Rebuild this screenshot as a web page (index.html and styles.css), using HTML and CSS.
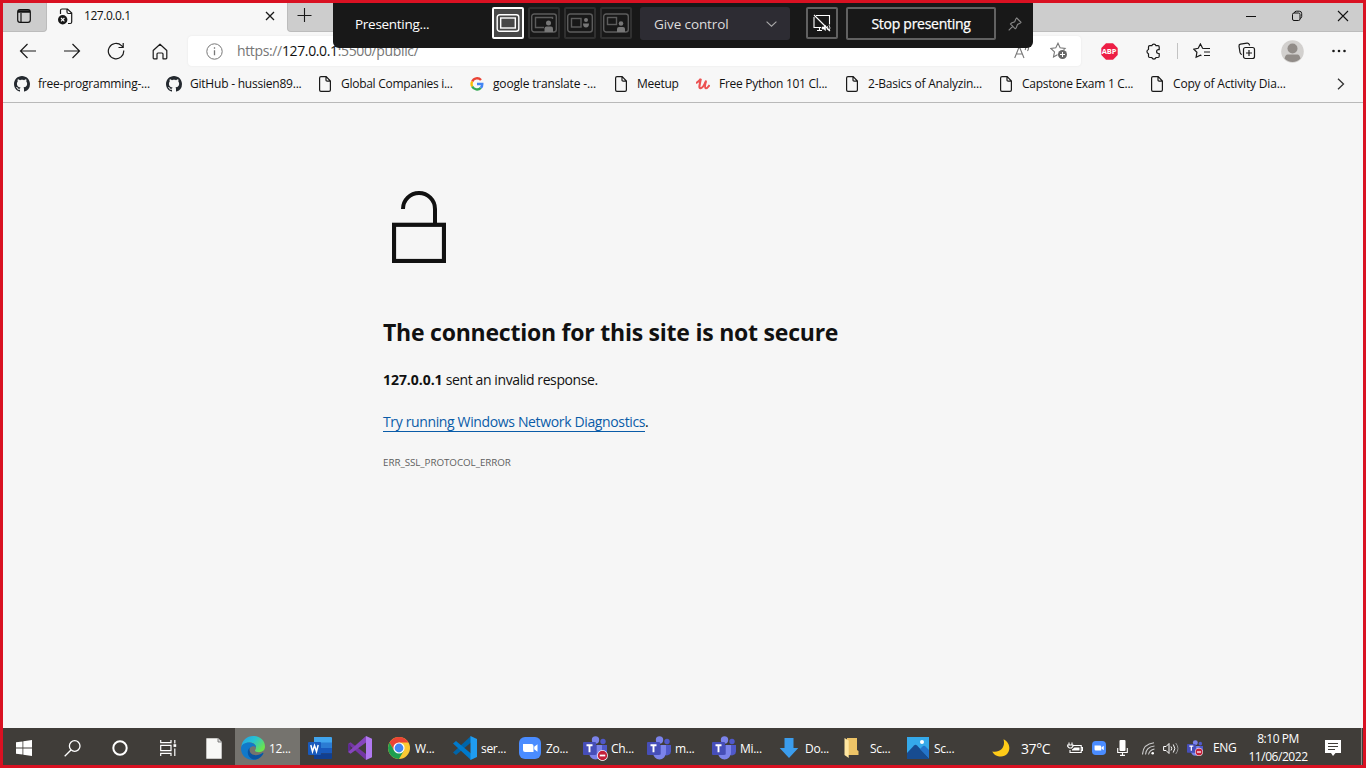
FILE: index.html
```html
<!DOCTYPE html>
<html lang="en">
<head>
<meta charset="utf-8">
<title>127.0.0.1</title>
<link rel="stylesheet" href="styles.css">
</head>
<body>
<svg class="defs" width="0" height="0">
  <symbol id="doc" viewBox="0 0 12 16"><path d="M2 .6h5.200L11.400 5v9q0 1.400-1.400 1.400H2Q.6 15.400.6 14V2Q.6.6 2 .6ZM7 .8V4q0 1.200 1.200 1.200h3" fill="none" stroke="#1a1a1a" stroke-width="1.200"/></symbol>
  <symbol id="github" viewBox="0 0 16 16"><path fill="#24292f" d="M8 0C3.580 0 0 3.580 0 8c0 3.540 2.290 6.530 5.470 7.590.4.070.55-.17.55-.38 0-.19-.01-.82-.01-1.490-2.010.37-2.530-.49-2.690-.94-.09-.23-.48-.94-.82-1.130-.28-.15-.68-.52-.01-.53.63-.01 1.080.58 1.230.82.72 1.210 1.870.87 2.330.66.070-.52.28-.87.51-1.070-1.780-.2-3.640-.89-3.640-3.950 0-.87.31-1.590.82-2.150-.08-.2-.36-1.020.08-2.120 0 0 .67-.21 2.200.82.64-.18 1.320-.27 2-.27s1.360.09 2 .27c1.530-1.040 2.200-.82 2.200-.82.44 1.100.16 1.920.08 2.120.51.56.82 1.270.82 2.150 0 3.070-1.870 3.750-3.650 3.950.29.25.54.73.54 1.480 0 1.070-.01 1.930-.01 2.200 0 .21.15.46.55.38A8 8 0 0 0 16 8c0-4.420-3.580-8-8-8Z"/></symbol>
  <symbol id="teams" viewBox="0 0 24 24"><circle cx="20" cy="5.500" r="2.700" fill="#5059c9"/><path d="M16 9h8v6.500a4 4 0 0 1-7 2.500Z" fill="#5059c9"/><circle cx="12.500" cy="4" r="3.700" fill="#7b83eb"/><path d="M6 9h13v8a6.500 6.500 0 0 1-13 0Z" fill="#7b83eb"/><path d="M7 9h7v9.500H6Z" fill="#565dc4"/><rect y="6" width="13" height="13" rx="1" fill="#464eb8"/><path d="M3.500 9.300h6M6.500 9.300v7" stroke="#fff" stroke-width="1.900"/></symbol>
  <symbol id="zoom" viewBox="0 0 22 22"><rect width="22" height="22" rx="6" fill="#4a8cff"/><path d="M4 7h8.500q2 0 2 2v6H6q-2 0-2-2ZM15.200 9.700 18.500 7.300v7.400l-3.300-2.400Z" fill="#fff"/></symbol>
  <symbol id="badge" viewBox="0 0 10 10"><circle cx="5" cy="5" r="4.900" fill="#fff"/><circle cx="5" cy="5" r="4.300" fill="#c4203a"/><path d="M2.500 5h5" stroke="#fff" stroke-width="1.600"/></symbol>
</svg>

<div class="screen">
  <header class="tabstrip">
    <div class="tab-menu"><svg width="14" height="14" viewBox="0 0 14 14" fill="none" stroke="#111" stroke-width="1.200"><rect x=".7" y=".7" width="12.600" height="12.600" rx="2.300"/><path d="M1 2.500h12" stroke-width="2.500"/><path d="M4 4v9"/></svg></div>
    <div class="tab">
      <svg width="15" height="17" viewBox="0 0 15 17"><path d="M2.500 6V2.500Q2.500 1 4 1h5.500L13.700 5v9q0 1.500-1.500 1.500H10M9 1v3q0 1.500 1.500 1.500h3" fill="none" stroke="#1a1a1a" stroke-width="1.200"/><circle cx="4.700" cy="11.700" r="4.700" fill="#171717"/><path d="m3 10 3.400 3.400m0-3.400L3 13.400" stroke="#fff" stroke-width="1.100"/></svg>
      <span class="tab-title">127.0.0.1</span>
      <svg class="tab-close" width="10" height="10" viewBox="0 0 10 10"><path d="m1 1 8 8m0-8L1 9" stroke="#1a1a1a" stroke-width="1.300"/></svg>
    </div>
    <div class="tab-new"><svg width="16" height="16" viewBox="0 0 16 16"><path d="M7.500 1v14M.5 8.500h14" stroke="#1a1a1a" stroke-width="1.100"/></svg></div>
    <div class="window-buttons">
      <svg width="12" height="12" viewBox="0 0 12 12"><path d="M1 6.500h10" stroke="#111"/></svg>
      <svg width="12" height="12" viewBox="0 0 12 12" fill="none" stroke="#111"><rect x="1.500" y="3" width="7.500" height="7.500" rx="1.500"/><path d="M3.500 3q0-1.800 1.800-1.800h3q2.400 0 2.400 2.400v3q0 1.500-1.700 1.900"/></svg>
      <svg width="12" height="12" viewBox="0 0 12 12"><path d="m1 1 10 10m0-10L1 11" stroke="#111" stroke-width="1.100"/></svg>
    </div>
  </header>

  <nav class="toolbar">
    <span class="nav-btn"><svg width="18" height="16" viewBox="0 0 18 16" fill="none" stroke="#1a1a1a" stroke-width="1.200"><path d="M8.500 1 1.500 8l7 7M1.500 8H17"/></svg></span>
    <span class="nav-btn"><svg width="18" height="16" viewBox="0 0 18 16" fill="none" stroke="#1a1a1a" stroke-width="1.200"><path d="m9.500 1 7 7-7 7M16.500 8H1"/></svg></span>
    <span class="nav-btn"><svg width="18" height="18" viewBox="0 0 18 18" fill="none" stroke="#1a1a1a" stroke-width="1.200"><path d="M16.700 8.500A7.700 7.700 0 1 1 14.500 3.700L16 5.200M16.200 1v4.500h-4.700"/></svg></span>
    <span class="nav-btn"><svg width="16" height="17" viewBox="0 0 16 17" fill="none" stroke="#1a1a1a" stroke-width="1.200" stroke-linejoin="round"><path d="M1.200 7.500 8 1.200l6.800 6.300V15q0 .8-.8.8h-3V11q0-1-1-1H6q-1 0-1 1v4.800H2q-.8 0-.8-.8Z"/></svg></span>
    <div class="address">
      <svg class="info" width="17" height="17" viewBox="0 0 17 17" fill="none" stroke="#777"><circle cx="8.500" cy="8.500" r="7.700"/><path d="M8.500 7.300v5M8.500 4.300v1.500" stroke-width="1.300"/></svg>
      <span class="url">https://<b>127.0.0.1</b>:5500/public/</span>
      <svg class="read" width="16" height="15" viewBox="0 0 16 15" fill="none" stroke="#777" stroke-width="1.100"><path d="M.7 14 5.300 2.500 10 14M2.300 10h6M11 2.500q1.300 1.700 0 3.500M13.500 1q2 3 0 6"/></svg>
      <svg class="star" width="18" height="18" viewBox="0 0 18 18"><path d="m8 1.200 2.100 4.600 5 .6-3.700 3.500 1 5L8 12.400l-4.500 2.500 1-5L.8 6.400l5-.6Z" fill="none" stroke="#777" stroke-width="1.100"/><circle cx="12.500" cy="12.500" r="5" fill="#fff"/><circle cx="12.500" cy="12.500" r="4.500" fill="#666"/><path d="M12.500 10v5M10 12.500h5" stroke="#fff"/></svg>
    </div>
    <div class="actions">
      <span class="act act-abp"><svg width="17" height="17" viewBox="0 0 17 17"><path d="M5 .3h7L16.700 5v7L12 16.700H5L.3 12V5Z" fill="#ed1e45"/></svg><em>ABP</em></span>
      <span class="act ext"><svg width="17" height="17" viewBox="0 0 17 17" fill="none" stroke="#1a1a1a" stroke-width="1.200" stroke-linejoin="round"><path d="M4.700 2.700h2.100a2.200 2.200 0 0 1 4.200 0H13q1.200 0 1.200 1.200v2.800h-.7a1.900 1.900 0 0 0 0 3.800h.7v2.800q0 1.200-1.200 1.200h-2a2.200 2.200 0 0 1-4.200 0H4.700q-1.200 0-1.200-1.200v-2.600a2.200 2.200 0 0 1 0-4.200V3.900q0-1.200 1.200-1.200Z"/></svg></span>
      <span class="divider"></span>
      <span class="act fav"><svg width="18" height="17" viewBox="0 0 18 17" fill="none" stroke="#1a1a1a" stroke-width="1.200"><path d="M11 5.500 9.600 5.300 7.400 1 5.200 5.300.8 6.100l3.100 3.200-.8 5 4.300-2.200 1 .5M10.500 5.500H17M11 9h6M11 12.500h6"/></svg></span>
      <span class="act coll"><svg width="18" height="18" viewBox="0 0 18 18" fill="none" stroke="#1a1a1a" stroke-width="1.200"><path d="M4 12.500Q2.300 12.300 2 10.500L1 4.200Q.8 2.500 2.500 2.200L9 1.200q1.700-.2 2.300 1.300l.3 1"/><rect x="5.500" y="5.500" width="11" height="11" rx="2"/><path d="M11 8v6M8 11h6"/></svg></span>
      <span class="act avatar"><svg width="23" height="23" viewBox="0 0 23 23"><circle cx="11.500" cy="11.500" r="11.300" fill="#d2d0ce"/><circle cx="11.500" cy="8.500" r="5" fill="#918c88"/><path d="M3.500 18.500q1-4 3-4h10q2 0 3 4a11 11 0 0 1-16 0Z" fill="#918c88"/></svg></span>
      <span class="act"><svg width="16" height="4" viewBox="0 0 16 4" fill="#1a1a1a"><circle cx="2.500" cy="2" r="1.300"/><circle cx="8" cy="2" r="1.300"/><circle cx="13.500" cy="2" r="1.300"/></svg></span>
    </div>
  </nav>

  <nav class="bookmarks">
    <a class="w152"><svg width="16" height="16"><use href="#github"/></svg><span class="wide">free-programming-...</span></a>
    <a class="w152"><svg width="16" height="16"><use href="#github"/></svg><span class="wide">GitHub - hussien89...</span></a>
    <a class="w152"><svg width="12" height="16"><use href="#doc"/></svg><span>Global Companies i...</span></a>
    <a class="w144"><svg width="14" height="14" viewBox="0 0 14 14" fill="none" stroke-width="2.400"><path d="M11 3A5.300 5.300 0 0 0 2.200 4.500" stroke="#ea4335"/><path d="M2.200 4.500a5.300 5.300 0 0 0 0 5" stroke="#fbbc05"/><path d="M2.200 9.500a5.300 5.300 0 0 0 8.600 1.300" stroke="#34a853"/><path d="M10.800 10.800Q12.400 9.200 12.300 7H7" stroke="#4285f4"/></svg><span class="wider">google translate -...</span></a>
    <a class="w82"><svg width="12" height="16"><use href="#doc"/></svg><span>Meetup</span></a>
    <a class="w149"><svg width="14" height="14" viewBox="0 0 16 14" fill="none" stroke="#ec5252"><path d="M0 6Q4 3.500 5.500 1 4.500 6 4 9t1.500 2.700q2.500-.3 5.500-7.200" stroke-width="2.400"/><path d="M11.500 3Q9.500 11 11 11.700t4.500-3.500" stroke-width="2.400"/></svg><span>Free Python 101 Cl...</span></a>
    <a class="w154"><svg width="12" height="16"><use href="#doc"/></svg><span class="wide">2-Basics of Analyzin...</span></a>
    <a class="w151"><svg width="12" height="16"><use href="#doc"/></svg><span>Capstone Exam 1 C...</span></a>
    <a class="w151"><svg width="12" height="16"><use href="#doc"/></svg><span class="wider">Copy of Activity Dia...</span></a>
    <svg class="more" width="8" height="12" viewBox="0 0 8 12"><path d="m1 .7 5.500 5.300L1 11.300" fill="none" stroke="#333" stroke-width="1.300"/></svg>
  </nav>

  <main class="page">
    <svg class="lock" width="54" height="72" viewBox="0 0 54 72" fill="none" stroke="#111" stroke-width="4"><rect x="2" y="33.800" width="50" height="36.200" stroke-width="4.200"/><path d="M11 18a16 16 0 0 1 32 0v16"/></svg>
    <h1>The connection for this site is not secure</h1>
    <p class="message"><b>127.0.0.1</b> <span>sent an invalid response.</span></p>
    <p class="diagnose"><a>Try running Windows Network Diagnostics</a>.</p>
    <p class="code">ERR_SSL_PROTOCOL_ERROR</p>
  </main>

  <footer class="taskbar">
    <span class="sys"><svg width="16" height="16" viewBox="0 0 16 16" fill="#fff"><path d="M0 2.300 6.500 1.400v6.200H0ZM7.300 1.200 16 0v7.600H7.300ZM0 8.400h6.500v6.200L0 13.700ZM7.300 8.400H16V16l-8.700-1.200Z"/></svg></span>
    <span class="sys"><svg width="17" height="17" viewBox="0 0 17 17" fill="none" stroke="#fff" stroke-width="1.300"><circle cx="10.700" cy="6" r="5.300"/><path d="M7 10 .7 16.300"/></svg></span>
    <span class="sys"><svg width="16" height="16" viewBox="0 0 16 16" fill="none" stroke="#fff" stroke-width="2"><circle cx="8" cy="8" r="6.700"/></svg></span>
    <span class="sys"><svg width="17" height="16" viewBox="0 0 17 16" fill="none" stroke="#fff" stroke-width="1.200"><path d="M.7 0v2.600H11V0M.7 16v-2.600H11V16M.7 5.300H11v5.400H.7ZM14.800 0v3.500M14.800 8.500V16"/><path d="M13.500 4.200h2.700v2.700h-2.700Z" fill="#fff" stroke="none"/></svg></span>
    <span class="sys file"><svg width="16" height="21" viewBox="0 0 16 21"><path d="M.3.3H12L15.700 4v16.700H.3Z" fill="#f8f8f6"/><path d="M12 .3V4h3.700" fill="#ddd" stroke="#666" stroke-width=".8"/></svg></span>

    <span class="app active"><svg width="24" height="24" viewBox="0 0 24 24"><defs><linearGradient id="eg" x1="0" y1="0" x2="1" y2=".6"><stop offset="0" stop-color="#249fe8"/><stop offset=".5" stop-color="#27c2d2"/><stop offset="1" stop-color="#6be34d"/></linearGradient></defs><path d="M.4 11C1 4 6 0 12 0c7 0 12 4.700 12 10.500 0 3.700-2.600 5.700-6 5.700-2.500 0-4-.8-4-1.700 0-.7 1-1.200 1-3 0-2.700-2.500-5-6-5-3.800 0-7 2-8.600 4.500Z" fill="url(#eg)"/><path d="M0 12.500C0 8.500 4 6.300 8.500 6.500c3.800.1 6.500 2.200 6.500 5-1-1.200-2.700-1.700-4-1C5.500 13 8 20 15 19.700c3-.1 5.500-1.700 6.500-2.700.6-.5 1 0 .8.500C20.500 21 17 24 12 24 5 24 0 19 0 12.500Z" fill="#1079ca"/><path d="M8.700 11.700C4.200 16 8 24 14.500 23.600c4-.8 6.500-3.200 7.800-6.100.2-.5-.2-1-.8-.5-5 3.900-14.500 2.800-12.800-5.300Z" fill="#0b54a0"/></svg><span>12...</span></span>
    <span class="app word"><svg width="24" height="22" viewBox="0 0 24 22"><path d="M6 0h17q1 0 1 1v5H6Z" fill="#41a5ee"/><path d="M6 5.500h18V11H6Z" fill="#2b7cd3"/><path d="M6 11h18v5.500H6Z" fill="#185abd"/><path d="M6 16.500h18V21q0 1-1 1H6Z" fill="#103f91"/><rect y="5" width="13" height="13" rx="1" fill="#185abd"/><path d="m2.800 8 1.700 6.500L6.500 8.500l2 6L10.200 8" fill="none" stroke="#fff" stroke-width="1.500"/></svg></span>
    <span class="app vs"><svg width="24" height="24" viewBox="0 0 24 24"><path d="M0 8 2.500 6.300 18 18v6Z" fill="#7436a5"/><path d="M0 8v8l2.500-1.500v-6Z" fill="#5f2a91"/><path d="M0 16 18 0v6.500L2.500 17.700Z" fill="#8645bd"/><path d="m18 0 6 2.700v18.600L18 24Z" fill="#b179f1"/></svg></span>
    <span class="app w66"><svg width="24" height="24" viewBox="0 0 24 24"><circle cx="12" cy="12" r="11" fill="#fcc934"/><path d="M2.500 6.500a11 11 0 0 1 19 0H12L7.200 14.700Z" fill="#ea4335"/><path d="M2.500 6.500A11 11 0 0 0 12 23l4.800-8.200H7.200Z" fill="#1e9e50"/><circle cx="12" cy="12" r="5.600" fill="#fff"/><circle cx="12" cy="12" r="4.400" fill="#4285f4"/></svg><span>W...</span></span>
    <span class="app"><svg width="24" height="24" viewBox="0 0 24 24"><path d="M18 0v6.500L3 19 0 16.500Z" fill="#0065a9"/><path d="M0 7.500 3 5l15 12.500V24Z" fill="#007acc"/><path d="m17.500 0 6.500 3v18l-6.500 3Z" fill="#1f9cf0"/></svg><span>ser...</span></span>
    <span class="app"><svg width="24" height="22" viewBox="-1 0 24 22"><use href="#zoom" width="22" height="22"/></svg><span>Zo...</span></span>
    <span class="app w64 busy"><svg width="24" height="24"><use href="#teams"/></svg><svg class="status" width="11" height="11"><use href="#badge"/></svg><span>Ch...</span></span>
    <span class="app"><svg width="24" height="24"><use href="#teams"/></svg><span>m...</span></span>
    <span class="app"><svg width="24" height="24"><use href="#teams"/></svg><span>Mi...</span></span>
    <span class="app w64"><svg width="24" height="20" viewBox="0 0 24 20"><path d="M7.500 0h9v10h4.800L12 20 2.700 10h4.800Z" fill="#3b9ded"/></svg><span>Do...</span></span>
    <span class="app folder"><svg width="24" height="22" viewBox="0 0 24 22"><path d="M7 1h10v12l1.500 1v4H7Z" fill="#edc467"/><path d="m4.500 1 4.200 2.500V21L4.500 18Z" fill="#ffe7a1"/></svg><span>Sc...</span></span>
    <span class="app w92"><svg width="24" height="24" viewBox="0 0 24 24"><path d="M1 1h22v22H1Z" fill="#35a9ea"/><path d="M1 17 8 9.500q1.500-1.300 3 0L23 22v1H1Z" fill="#174c91"/><path d="m14 13 2.500-2.500q1.500-1.300 3 0L23 14v8Z" fill="#2374cb"/><circle cx="16" cy="6" r="2" fill="#fff"/></svg><span>Sc...</span></span>

    <div class="tray">
      <span class="weather"><svg width="18" height="18" viewBox="0 0 18 18"><path d="M11.500.3C21 5 18 17.500 9 17.500 5 17.500 1.500 15.500.3 12.500c8 1.500 13.500-4.500 11.200-12.200Z" fill="#fecb18"/></svg><span>37°C</span></span>
      <svg class="t-battery" width="16" height="13" viewBox="0 0 16 13" fill="none" stroke="#fff" stroke-width="1.100"><path d="M5.500 3.500h8.700v7H3V8M2 .5v2M5 .5v2M.7 3h5.200v1.500L4.500 6H2.300L.7 4.500ZM14.500 5.500h1v3h-1"/><path d="M7.500 5.500h5v3H5v-1Z" fill="#fff" stroke="none"/></svg>
      <svg class="t-zoom" width="14" height="14"><use href="#zoom"/></svg>
      <svg class="t-mic" width="11" height="16" viewBox="0 0 11 16"><rect x="2.500" width="6" height="11" rx="1" fill="#fff"/><path d="M.7 8v4.500h9.600V8M5.500 12v4M3 15.400h5" fill="none" stroke="#fff" stroke-width="1.100"/></svg>
      <svg class="t-wifi" width="13" height="13" viewBox="0 0 13 13" fill="none" stroke="#ccc"><path d="M.5 12.500Q1 2 12 .8M3.500 12.500Q4 5 12.500 4M6.500 12.500Q7.500 8 12.500 7" stroke-width="1.100"/><circle cx="10.700" cy="11.300" r="1.300" fill="#fff" stroke="none"/></svg>
      <svg class="t-sound" width="16" height="13" viewBox="0 0 16 13" fill="none" stroke="#fff"><path d="M.6 4.500h2.500L6 1.500v10l-2.900-3H.6ZM8 4.500q1.500 2 0 4M10.300 2.500q3 4 0 8"/><path d="M12.700 1q4.500 5.500 0 11" stroke="#999"/></svg>
      <span class="t-teams"><svg width="16" height="16"><use href="#teams"/></svg><svg class="status" width="8" height="8"><use href="#badge"/></svg></span>
      <span class="lang">ENG</span>
      <span class="clock"><span class="time">8:10 PM</span><span class="date">11/06/2022</span></span>
      <svg class="t-note" width="16" height="16" viewBox="0 0 16 16"><path d="M0 0h16v13h-5.500L8 16l-2-3H0Z" fill="#fff"/><path d="M3 3.500h10M3 6.500h10M3 9.500h7" stroke="#403d39"/></svg>
      <span class="peek"></span>
    </div>
  </footer>

  <section class="presenter">
    <span class="presenting">Presenting...</span>
    <div class="modes">
      <span class="mode on"><svg width="24" height="20" viewBox="0 0 24 20" fill="none" stroke="#fff" stroke-width="1.400"><rect x="1.200" y="1.700" width="21.600" height="16.600" rx="2.500"/><rect x="4.700" y="5" width="14.600" height="10"/></svg></span>
      <span class="mode"><svg width="26" height="20" viewBox="0 0 26 20" fill="none" stroke="#5c5c5c" stroke-width="1.400"><rect x=".7" y="1" width="24.600" height="18" rx="2.500"/><path d="M13 14.500H4.500v-10h17V6"/><circle cx="17.500" cy="10" r="2.500" fill="#777" stroke="none"/><path d="M13.500 19v-3.500q0-2 2-2h4.500q2 0 2 2V19Z" fill="#777" stroke="none"/></svg></span>
      <span class="mode"><svg width="26" height="20" viewBox="0 0 26 20" fill="none" stroke="#5c5c5c" stroke-width="1.400"><rect x=".7" y="1" width="24.600" height="18" rx="2.500"/><rect x="4.500" y="5.500" width="9.500" height="8.500"/><circle cx="19" cy="7" r="2" fill="#777" stroke="none"/><path d="M16 10.500h6q0 4-3 4t-3-4Z" fill="#777" stroke="none"/></svg></span>
      <span class="mode"><svg width="26" height="20" viewBox="0 0 26 20" fill="none" stroke="#5c5c5c" stroke-width="1.400"><rect x=".7" y="1" width="24.600" height="18" rx="2.500"/><rect x="4.500" y="4.500" width="9" height="7"/><circle cx="18" cy="10.500" r="2.300" fill="#777" stroke="none"/><path d="M14 19v-3q0-2 2-2h4q2 0 2 2v3Z" fill="#777" stroke="none"/></svg></span>
    </div>
    <div class="give"><span>Give control</span><svg width="11" height="6" viewBox="0 0 11 6"><path d="m.6.6 4.900 4.600L10.400.6" fill="none" stroke="#aaa" stroke-width="1.100"/></svg></div>
    <span class="mute"><svg width="18" height="18" viewBox="0 0 18 18" fill="none" stroke="#fff" stroke-width="1.100"><path d="M3 1.500h13.500v9M8 13.500H1V3M4 16.500h5M6.500 13.500v3M1 1l16 16"/><path d="M9 13h1.500l2-1.500v5l-2-1.500H9Z" fill="#fff" stroke-width=".6"/><path d="M14.200 12q1.300 2 0 4M16 11q2 3 0 6" stroke-width=".8"/></svg></span>
    <span class="stop">Stop presenting</span>
    <svg class="pin" width="14" height="14" viewBox="0 0 14 14" fill="none" stroke="#888" stroke-width="1.100"><path d="m8.700 1 4.300 4.300-1 1L9.500 7.500 8.200 11l-1 .8L2.500 7l1-1L6.700 4.800 7.800 2ZM4.700 9.300.7 13.300"/></svg>
  </section>
  <div class="share-frame"></div>
</div>
</body>
</html>
```

FILE: styles.css
```css
* { box-sizing: border-box; }
body { margin: 0; font-family: "Open Sans", "Noto Sans", sans-serif; color: #111; }
svg { display: block; flex: none; }
.defs { position: absolute; }
.screen {
  position: relative; width: 1366px; height: 768px; overflow: hidden;
  display: grid; grid-template-rows: 32px 36px 35px 1fr 40px; background: #f6f6f6;
}

/* Tab strip */
.tabstrip { display: flex; background: #f7f7f7; }
.tab-menu, .tab-new, .window-buttons { background: #cdcdcd; border-bottom: 1px solid #bcbcbc; }
.tab-menu { width: 47px; padding: 9px 0 0 17px; border-right: 1px solid #bcbcbc; border-radius: 0 0 4px 0; }
.tab { width: 240px; display: flex; align-items: center; padding: 0 12px 0 11px; }
.tab-title { margin-left: 11px; font-size: 12px; letter-spacing: -.45px; padding-bottom: 1px; }
.tab-close { margin-left: auto; }
.tab-new { width: 46px; padding: 7px 0 0 9px; border-left: 1px solid #bcbcbc; border-radius: 0 0 0 4px; }
.window-buttons { flex: 1; display: flex; justify-content: flex-end; gap: 34px; padding: 10px 17px 0 0; }

/* Toolbar */
.toolbar { display: flex; align-items: center; background: #f7f7f7; padding: 2px 0 0 6px; }
.nav-btn { width: 44px; height: 34px; display: grid; place-items: center; }
.address { margin-left: 6px; width: 893px; height: 30px; background: #fff; border-radius: 4px; display: flex; align-items: center; box-shadow: 0 0 2px #e4e4e4; }
.info { margin-left: 18px; }
.url { margin-left: 14px; font-size: 14px; color: #767676; letter-spacing: -.36px; padding-bottom: 1px; }
.url b { font-weight: 400; color: #111; }
.read { margin-left: auto; margin-right: 20px; }
.star { margin-right: 13px; }
.actions { flex: 1; display: flex; align-items: center; padding-left: 5px; }
.act { width: 46px; height: 30px; display: grid; place-items: center; flex: none; }
.act svg, .act em { grid-area: 1 / 1; }
.act em { font: 700 7.500px "Open Sans", sans-serif; letter-spacing: -.2px; color: #fff; }
.act.ext { width: 43px; }
.act.fav { width: 47px; }
.act.coll { width: 43px; }
.act.avatar { width: 48px; }
.divider { width: 1px; height: 16px; background: #c3c3c3; margin: 0 0 0 2px; }

/* Bookmarks */
.bookmarks { display: flex; align-items: center; background: #f7f7f7; border-bottom: 1px solid #b9b9b9; padding: 0 21px 3px 14px; font-size: 12px; letter-spacing: -.28px; }
.bookmarks a { display: flex; align-items: center; gap: 8px; white-space: nowrap; }
.bookmarks .wide { letter-spacing: -.22px; }
.bookmarks .wider { letter-spacing: -.17px; }
.bookmarks a svg[width="12"] { margin-left: 1px; margin-right: 2px; }
.bookmarks a svg[width="14"] { margin-right: 1px; }
.w152 { width: 152px; }
.w144 { width: 144px; }
.w82 { width: 82px; }
.w149 { width: 149px; }
.w154 { width: 154px; }
.w151 { width: 151px; }
.more { margin-left: auto; }

/* Error page */
.page { padding: 88px 0 0 383px; }
.lock { margin-left: 9px; }
h1 { margin: 52px 0 0; font-size: 23px; line-height: 34px; font-weight: 700; letter-spacing: -.23px; white-space: nowrap; }
p { margin: 0; font-size: 14px; line-height: 20px; }
.message { margin-top: 21px; letter-spacing: -.4px; }
.message b { letter-spacing: -.05px; }
.diagnose { margin-top: 22px; letter-spacing: -.36px; }
.diagnose a { color: #0a5ca8; border-bottom: 1px solid #0a5ca8; }
.code { margin-top: 21px; font-size: 9.800px; letter-spacing: -.05px; color: #5e5e5e; }

/* Taskbar */
.taskbar { display: flex; align-items: center; background: #403d39; color: #fff; font-size: 12px; letter-spacing: -.3px; white-space: nowrap; }
.sys { width: 48px; height: 40px; display: grid; place-items: center; flex: none; }
.file { width: 43px; }
.app { width: 65px; height: 40px; display: flex; align-items: center; gap: 4px; padding-left: 6px; flex: none; }
.active { background: #75736e; margin-right: 2px; }
.word { width: 40px; }
.vs { width: 39px; }
.w66 { width: 66px; }
.w64 { width: 64px; }
.w92 { width: 92px; }
.busy { position: relative; }
.busy .status { position: absolute; left: 20px; top: 22px; }
.folder { gap: 5px; padding-left: 5px; }
.tray { flex: 1; display: flex; align-items: center; height: 40px; }
.weather { display: flex; align-items: center; gap: 11px; font-size: 14px; letter-spacing: -.4px; width: 75px; }
.t-zoom { margin-left: 9px; }
.t-mic { margin-left: 11px; }
.t-wifi { margin-left: 14px; }
.t-sound { margin-left: 8px; }
.t-teams { position: relative; margin-left: 8px; }
.t-teams .status { position: absolute; right: 0; bottom: 0; }
.lang { margin-left: 10px; padding-bottom: 1px; width: 25px; }
.clock { width: 60px; margin-left: 10px; display: flex; flex-direction: column; align-items: center; line-height: 18px; padding-bottom: 1px; letter-spacing: -.45px; }
.t-note { margin-left: 17px; }
.peek { margin-left: auto; margin-right: 4px; width: 1px; height: 40px; background: #8d8b88; }
.folder span { padding-left: 1px; }

/* Screen-sharing bar floating over the browser */
.presenter { position: absolute; left: 333px; top: 0; width: 700px; height: 48px; border-radius: 0 0 6px 6px; background: #181818; color: #fff; display: flex; align-items: center; padding: 0 11px 0 22px; font-size: 13.500px; letter-spacing: -.28px; white-space: nowrap; }
.presenting { width: 137px; }
.modes { display: flex; gap: 4px; }
.mode { width: 32px; height: 32px; border: 2px solid #303030; border-radius: 2px; display: grid; place-items: center; margin-bottom: 2px; }
.mode.on { border-color: #fff; background: #484848; }
.give { width: 150px; height: 33px; margin-left: 8px; background: #2d2c33; border-radius: 3px; display: flex; align-items: center; justify-content: space-between; padding: 0 13px 0 14px; color: #ddd; margin-bottom: 1px; letter-spacing: -.1px; }
.mute { width: 32px; height: 32px; margin: 0 8px 2px 16px; border: 2px solid #616161; border-radius: 2px; display: grid; place-items: center; }
.stop { width: 150px; height: 33px; border: 2px solid #616161; border-radius: 2px; display: grid; place-items: center; font-size: 14px; -webkit-text-stroke: .25px #fff; margin-bottom: 1px; padding-bottom: 1px; }
.pin { margin-left: auto; }
.share-frame { position: absolute; inset: 0; border: 3px solid #d91122; pointer-events: none; }
```
